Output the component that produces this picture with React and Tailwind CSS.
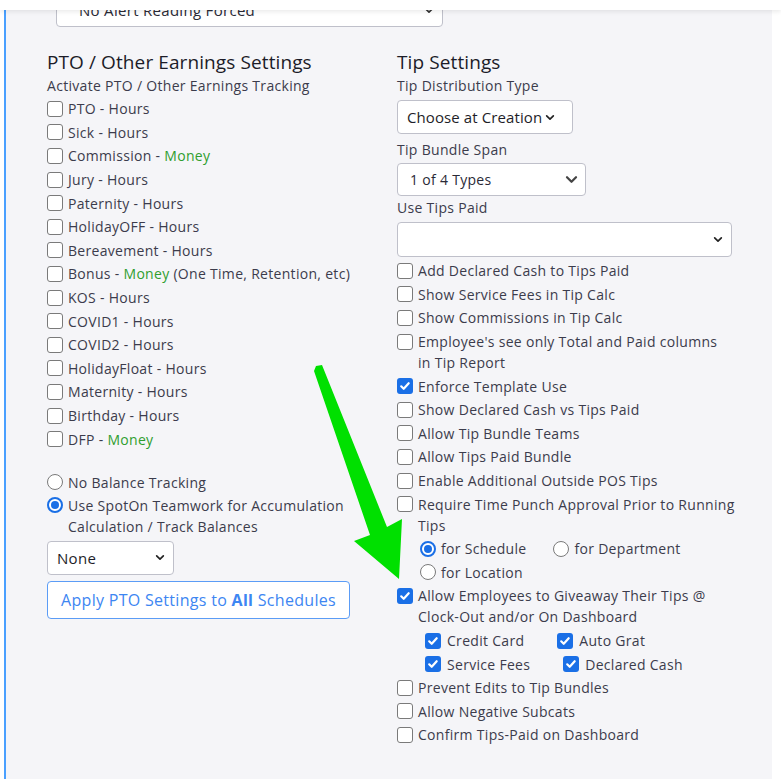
const font = { fontFamily: '"Open Sans", "DejaVu Sans", sans-serif' };

const Chevron = ({ className }) => (
  <svg className={className} viewBox="0 0 12 8" fill="none" stroke="currentColor" strokeWidth={2} strokeLinecap="round" strokeLinejoin="round">
    <path d="M2 2l4 4 4-4" />
  </svg>
);

const Box = ({ checked }) =>
  checked ? (
    <span className="flex h-[16px] w-[16px] shrink-0 items-center justify-center rounded-[3px] bg-[#1a6fe6]">
      <svg className="h-[12px] w-[12px]" viewBox="0 0 12 12" fill="none" stroke="white" strokeWidth={2.2} strokeLinecap="round" strokeLinejoin="round">
        <path d="M2.2 6.3l2.5 2.5 5-5.6" />
      </svg>
    </span>
  ) : (
    <span className="block h-[16px] w-[16px] shrink-0 rounded-[3px] border border-[#7a7a7a] bg-white" />
  );

const Radio = ({ checked }) =>
  checked ? (
    <span className="flex h-[16px] w-[16px] shrink-0 items-center justify-center rounded-full border-[2px] border-[#1a6fe6] bg-white">
      <span className="h-[8px] w-[8px] rounded-full bg-[#1a6fe6]" />
    </span>
  ) : (
    <span className="block h-[16px] w-[16px] shrink-0 rounded-full border border-[#7a7a7a] bg-white" />
  );

const Check = ({ checked, children }) => (
  <div className="flex items-start gap-[5px] py-[1.3px] leading-[21px]">
    <span className="mt-[2.5px]">
      <Box checked={checked} />
    </span>
    <span>{children}</span>
  </div>
);

const Money = () => <span className="text-[#2f9e2f]">Money</span>;

const ptoRows = [
  ["PTO - Hours"],
  ["Sick - Hours"],
  ["Commission - ", true],
  ["Jury - Hours"],
  ["Paternity - Hours"],
  ["HolidayOFF - Hours"],
  ["Bereavement - Hours"],
  ["Bonus - ", true, " (One Time, Retention, etc)"],
  ["KOS - Hours"],
  ["COVID1 - Hours"],
  ["COVID2 - Hours"],
  ["HolidayFloat - Hours"],
  ["Maternity - Hours"],
  ["Birthday - Hours"],
  ["DFP - ", true],
];

const tipRowsA = [
  ["Add Declared Cash to Tips Paid"],
  ["Show Service Fees in Tip Calc"],
  ["Show Commissions in Tip Calc"],
  [<>Employee's see only Total and Paid columns<br />in Tip Report</>],
  ["Enforce Template Use", true],
  ["Show Declared Cash vs Tips Paid"],
  ["Allow Tip Bundle Teams"],
  ["Allow Tips Paid Bundle"],
  ["Enable Additional Outside POS Tips"],
  [<>Require Time Punch Approval Prior to Running<br />Tips</>],
];

const tipRowsB = [
  "Prevent Edits to Tip Bundles",
  "Allow Negative Subcats",
  "Confirm Tips-Paid on Dashboard",
];

export default function App() {
  return (
    <div className="relative flex h-[779px] w-[781px] flex-col overflow-hidden bg-white text-[14px] tracking-[0.3px] text-[#3c3c4c]" style={font}>
      {/* top bar */}
      <div className="relative z-10 h-[10px] shrink-0 bg-white shadow-[0_2px_4px_rgba(0,0,0,0.08)]" />

      <div className="flex min-h-0 flex-1">
        <div className="ml-[4px] w-[2px] shrink-0 bg-[#4aa0ff]" />
        <div className="w-[766px] shrink-0 overflow-hidden bg-[#f5f5f8]">
          <div className="-mt-[17px] pl-[50px]">
            <div className="flex h-[34px] w-[387px] items-center justify-between rounded-[4px] border border-[#bfc0ca] bg-white pl-[22px] pr-[8px] text-[15px] text-[#2a2a36]">
              <span>No Alert Reading Forced</span>
              <Chevron className="h-[7px] w-[10px] text-[#333]" />
            </div>
          </div>

          <div className="mt-[23px] grid grid-cols-[350px_1fr] pl-[41px]">
            {/* PTO column */}
            <div className="flex flex-col">
              <h2 className="text-[19px] font-medium leading-[24px] tracking-[0.1px] text-[#1c1c28]">PTO / Other Earnings Settings</h2>
              <p className="mt-[1px] leading-[21px]">Activate PTO / Other Earnings Tracking</p>
              <div className="mt-[1px] flex flex-col">
                {ptoRows.map(([a, m, b], i) => (
                  <Check key={i}>
                    {a}
                    {m && <Money />}
                    {b}
                  </Check>
                ))}
              </div>

              <div className="mt-[20px] flex flex-col">
                <div className="flex items-start gap-[5px] py-[1px] leading-[21px]">
                  <span className="mt-[2.5px]"><Radio /></span>
                  <span>No Balance Tracking</span>
                </div>
                <div className="flex items-start gap-[5px] py-[1px] leading-[21px]">
                  <span className="mt-[2.5px]"><Radio checked /></span>
                  <span className="w-[285px]">Use SpotOn Teamwork for Accumulation Calculation / Track Balances</span>
                </div>
              </div>

              <div className="mt-[3px] flex h-[34px] w-[127px] items-center justify-between rounded-[4px] border border-[#bfc0ca] bg-white pl-[9px] pr-[8px] text-[15px] text-[#1e1e28]">
                <span>None</span>
                <Chevron className="h-[7px] w-[10px] text-[#222]" />
              </div>

              <button className="mt-[6px] h-[38px] w-[303px] rounded-[4px] border border-[#5b9cf6] bg-white text-[16px] text-[#3d86f2]">
                Apply PTO Settings to <span className="font-bold">All</span> Schedules
              </button>
            </div>

            {/* Tip column */}
            <div className="flex flex-col">
              <h2 className="text-[19px] font-medium leading-[24px] tracking-[0.1px] text-[#1c1c28]">Tip Settings</h2>
              <p className="mt-[1px] leading-[21px]">Tip Distribution Type</p>
              <div className="mt-[4px] flex h-[34px] w-[176px] items-center gap-[3px] rounded-[4px] border border-[#bfc0ca] bg-white pl-[9px] text-[15px] tracking-[0.1px] text-[#1e1e28]">
                <span>Choose at Creation</span>
                <Chevron className="h-[7px] w-[10px] text-[#222]" />
              </div>
              <p className="mt-[5px] leading-[21px]">Tip Bundle Span</p>
              <div className="mt-[3px] flex h-[33px] w-[189px] items-center justify-between rounded-[4px] border border-[#bfc0ca] bg-white pl-[12px] pr-[6px] text-[14px] text-[#2a2a36]">
                <span>1 of 4 Types</span>
                <Chevron className="h-[9px] w-[15px] text-[#444]" />
              </div>
              <p className="mt-[1px] leading-[21px]">Use Tips Paid</p>
              <div className="mt-[4px] flex h-[35px] w-[335px] items-center justify-end rounded-[4px] border border-[#bfc0ca] bg-white pr-[8px]">
                <Chevron className="h-[7px] w-[10px] text-[#222]" />
              </div>

              <div className="mt-[2px] flex w-[360px] flex-col">
                {tipRowsA.map(([t, c], i) => (
                  <Check key={i} checked={c}>{t}</Check>
                ))}

                <div className="flex flex-wrap pl-[23px]">
                  <div className="flex items-center gap-[5px] py-[1.3px] leading-[21px]">
                    <Radio checked />
                    <span>for Schedule</span>
                  </div>
                  <div className="ml-[27px] flex items-center gap-[5px] py-[1.3px] leading-[21px]">
                    <Radio />
                    <span>for Department</span>
                  </div>
                  <div className="flex w-full items-center gap-[5px] py-[1.3px] leading-[21px]">
                    <Radio />
                    <span>for Location</span>
                  </div>
                </div>

                <Check checked>Allow Employees to Giveaway Their Tips @<br />Clock-Out and/or On Dashboard</Check>

                <div className="flex flex-col pl-[28px]">
                  <div className="flex items-center py-[1.3px] leading-[21px]">
                    <Box checked />
                    <span className="ml-[6px]">Credit Card</span>
                    <span className="ml-[33px]"><Box checked /></span>
                    <span className="ml-[6px]">Auto Grat</span>
                  </div>
                  <div className="flex items-center py-[1.3px] leading-[21px]">
                    <Box checked />
                    <span className="ml-[6px]">Service Fees</span>
                    <span className="ml-[33px]"><Box checked /></span>
                    <span className="ml-[6px]">Declared Cash</span>
                  </div>
                </div>

                {tipRowsB.map((t, i) => (
                  <Check key={i}>{t}</Check>
                ))}
              </div>
            </div>
          </div>

          <h2 className="mt-[28px] pl-[41px] text-[19px] font-medium leading-[24px] text-[#1c1c28]">Other Settings</h2>
        </div>
        <div className="flex-1 bg-white" />
      </div>

      {/* annotation arrow */}
      <svg className="pointer-events-none absolute left-0 top-0" width="781" height="779" viewBox="0 0 781 779">
        <polygon
          fill="#00e000"
          points="314,371 316,366 322,365 387,527 402,519 399,579 354,541 370,535"
        />
      </svg>
    </div>
  );
}
